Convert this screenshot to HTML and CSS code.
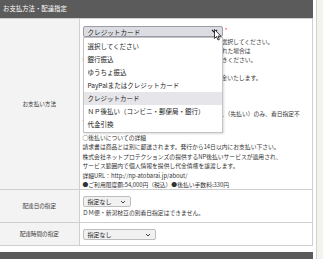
FILE: index.html
```html
<!DOCTYPE html>
<html lang="ja">
<head>
  <meta charset="UTF-8">
  <title>お支払方法・配達指定</title>
  <link rel="stylesheet" href="styles.css">
</head>
<body>
  <div class="page">
    <div class="main">
      <!-- お支払方法・配達指定 -->
      <div class="section-title">お支払方法・配達指定</div>

      <table class="form-table">
        <tr class="row-payment">
          <th>お支払い方法</th>
          <td>
            <div class="select-line">
              <div class="select-wrap">
                <div class="select select-open">
                  <span>クレジットカード</span>
                  <svg class="chevron" width="7" height="5" viewBox="0 0 7 5"><path d="M1 1 L3.5 3.5 L6 1" fill="none" stroke="#222" stroke-width="1.2"/></svg>
                </div>
                <ul class="select-list">
                  <li>選択してください</li>
                  <li>銀行振込</li>
                  <li>ゆうちょ振込</li>
                  <li>PayPalまたはクレジットカード</li>
                  <li class="selected">クレジットカード</li>
                  <li>ＮＰ後払い（コンビニ・郵便局・銀行）</li>
                  <li>代金引換</li>
                </ul>
                <svg class="cursor" width="8" height="12" viewBox="0 0 8 12"><path d="M0.5 0.5 L0.5 9.5 L2.6 7.6 L4 11 L5.4 10.4 L4 7.2 L7 7.2 Z" fill="#fff" stroke="#111" stroke-width="0.8"/></svg>
              </div>
              <span class="required">*</span>
            </div>

            <p class="note">
              ※お支払い方法はプルダウンメニューの中から必ずご選択してください。<br>
              ※代金引換・ＮＰ後払い以外のお支払い方法を選択された場合は<br>
              後でお送りするご注文確認メールをご覧の上、お手続きください。<br>
              <br>
              お支払い後にキャンセルとなった場合は、全額をご返金いたします。<br>
              ※代金引換手数料：330円（税込）<br>
              ※振込手数料はお客様ご負担となります。<br>
              ※ＤＭ便について<br>
              ＤＭ便はクレジットカード・銀行振込・ゆうちょ振込、（先払い）のみ、着日指定不<br>
              可となります。
            </p>

            <p class="note note-np">
              ○後払いについての詳細<br>
              請求書は商品とは別に郵送されます。発行から14日以内にお支払い下さい。<br>
              株式会社ネットプロテクションズの提供するNP後払いサービスが適用され、<br>
              サービス範囲内で個人情報を提供し代金債権を譲渡します。<br>
              詳細URL：http://np-atobarai.jp/about/<br>
              ●ご利用限度額:54,000円（税込）●後払い手数料:330円
            </p>
          </td>
        </tr>
        <tr>
          <th>配達日の指定</th>
          <td>
            <div class="select select-small">
              <span>指定なし</span>
              <svg class="chevron" width="6" height="4" viewBox="0 0 6 4"><path d="M1 1 L3 3 L5 1" fill="none" stroke="#444" stroke-width="1"/></svg>
            </div>
            <p class="note note-date">ＤＭ便・新潟枝豆の別着日指定はできません。</p>
          </td>
        </tr>
        <tr>
          <th>配達時間の指定</th>
          <td>
            <div class="select select-time">
              <span>指定なし</span>
              <svg class="chevron" width="6" height="4" viewBox="0 0 6 4"><path d="M1 1 L3 3 L5 1" fill="none" stroke="#444" stroke-width="1"/></svg>
            </div>
          </td>
        </tr>
      </table>

      <div class="section-title section-next"></div>
    </div>
    <div class="side"></div>
  </div>
</body>
</html>
```

FILE: styles.css
```css
/* 共通 */
* {
  box-sizing: border-box;
}

body {
  margin: 0;
  background: #fff;
  color: #333;
  font-family: "Noto Sans CJK JP", "Noto Sans", sans-serif;
}

.page {
  display: flex;
  height: 259px;
  overflow: hidden;
}

.main {
  width: 313px;
}

.side {
  flex: 1;
  margin-left: 3px;
  border-left: 1px solid #d6d2c6;
  background: #f4f2ec;
}

/* 見出し */
.section-title {
  height: 18px;
  padding-left: 3px;
  background: #5b5b5b;
  color: #fff;
  font-size: 6.4px;
  line-height: 18px;
}

.section-next {
  margin-top: 6px;
}

/* フォーム */
.form-table {
  width: 100%;
  border-collapse: collapse;
}

.form-table th {
  width: 79px;
  background: #f3f3f3;
  border: 1px solid #cfcfcf;
  border-left: none;
  font-size: 5.6px;
  font-weight: normal;
  text-align: center;
  vertical-align: middle;
}

.form-table td {
  border: 1px solid #cfcfcf;
  padding: 6px 2px 5px 3px;
  vertical-align: top;
}

.row-payment td {
  padding-top: 7px;
  padding-bottom: 0;
}

.note {
  margin: 0;
  font-size: 5.8px;
  line-height: 9px;
}

.note-np {
  margin-top: 6px;
  line-height: 9.4px;
}

.note-date {
  margin-top: 1px;
}

/* セレクト */
.select-line {
  display: flex;
  align-items: flex-start;
}

.select-wrap {
  position: relative;
}

.select {
  display: flex;
  align-items: center;
  justify-content: space-between;
  height: 11px;
  padding: 0 4px;
  background: #f1f1f1;
  border: 1px solid #bdbdbd;
  border-radius: 2px;
  font-size: 6px;
  color: #222;
}

.select-open {
  width: 140px;
  background: #dcdde2;
  border-color: #9c9ca4;
  font-size: 6.6px;
}

.select-small {
  width: 48px;
}

.select-time {
  width: 73px;
}

.select-list {
  position: absolute;
  top: 100%;
  left: 0;
  z-index: 2;
  width: 140px;
  margin: 0;
  padding: 1.5px 0 1px;
  list-style: none;
  background: #fff;
  border: 1px solid #c4c4c8;
  box-shadow: 1px 1px 2px rgba(0,0,0,0.15);
}

.select-list li {
  height: 13px;
  padding-left: 4px;
  font-size: 6.5px;
  line-height: 13px;
  color: #222;
  white-space: nowrap;
}

.select-list li.selected {
  background: #e6e6ea;
}

.cursor {
  position: absolute;
  top: 3px;
  right: 1px;
  z-index: 3;
}

.required {
  margin-left: 2px;
  color: #f06a6a;
  font-size: 7px;
  line-height: 9px;
}
```
